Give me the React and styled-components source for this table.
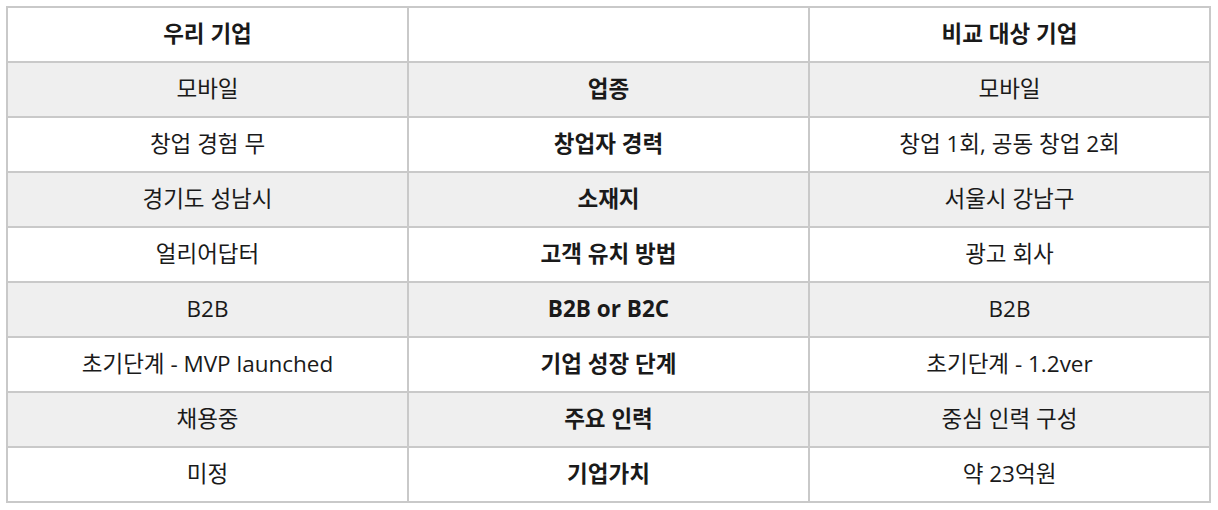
import React from 'react';
import styled, { createGlobalStyle } from 'styled-components';

const GlobalStyle = createGlobalStyle`
    html, body {
        margin: 0;
        padding: 0;
        background: #ffffff;
    }
    body {
        font-family: "Open Sans", "Noto Sans CJK KR", sans-serif;
        color: #1a1a1a;
    }
`;

const Page = styled.div`
    padding: 6px 7px 8px 6px;
`;

const Table = styled.table`
    width: 100%;
    border-collapse: collapse;
    table-layout: fixed;
    border: 2px solid #c9c9c9;
`;

const Row = styled.tr`
    background-color: ${(props) => (props.$striped ? '#efefef' : '#ffffff')};
`;

const Cell = styled.td`
    height: 53px;
    padding: 0;
    border: 2px solid #c9c9c9;
    text-align: center;
    vertical-align: middle;
    font-size: 22.5px;
    line-height: 1;
    font-weight: ${(props) => (props.$bold ? 700 : 400)};
`;

const rows = [
    ['모바일', '업종', '모바일'],
    ['창업 경험 무', '창업자 경력', '창업 1회, 공동 창업 2회'],
    ['경기도 성남시', '소재지', '서울시 강남구'],
    ['얼리어답터', '고객 유치 방법', '광고 회사'],
    ['B2B', 'B2B or B2C', 'B2B'],
    ['초기단계 - MVP launched', '기업 성장 단계', '초기단계 - 1.2ver'],
    ['채용중', '주요 인력', '중심 인력 구성'],
    ['미정', '기업가치', '약 23억원'],
];

const App = () => {
    return (
        <Page>
            <GlobalStyle />
            <Table>
                <tbody>
                    <Row>
                        <Cell $bold>우리 기업</Cell>
                        <Cell $bold></Cell>
                        <Cell $bold>비교 대상 기업</Cell>
                    </Row>
                    {rows.map((row, i) => (
                        <Row key={row[1]} $striped={i % 2 === 0}>
                            <Cell>{row[0]}</Cell>
                            <Cell $bold>{row[1]}</Cell>
                            <Cell>{row[2]}</Cell>
                        </Row>
                    ))}
                </tbody>
            </Table>
        </Page>
    );
};

export default App;
